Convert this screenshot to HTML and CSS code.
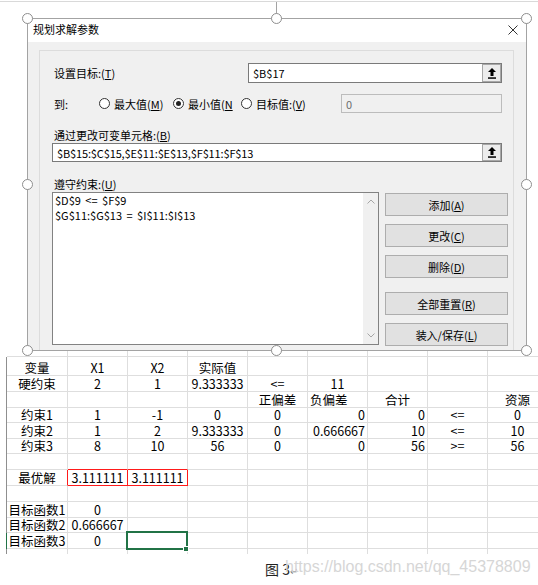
FILE: index.html
```html
<!DOCTYPE html>
<html lang="zh-CN">
<head>
<meta charset="utf-8">
<title>规划求解参数</title>
<link rel="stylesheet" href="styles.css">
</head>
<body>
<div class="page">
  <div class="topline"></div>
  <div class="frame">
    <span class="rot"></span>
    <span class="hd hd-tl"></span><span class="hd hd-tm"></span><span class="hd hd-tr"></span>
    <span class="hd hd-ml"></span><span class="hd hd-mr"></span>
    <span class="hd hd-bl"></span><span class="hd hd-bm"></span><span class="hd hd-br"></span>
    <div class="dialog">
      <div class="titlebar">
        <span class="title">规划求解参数</span>
        <svg class="close" width="10" height="10" viewBox="0 0 10 10"><path d="M0.5 0.5 L9.5 9.5 M9.5 0.5 L0.5 9.5" stroke="#333" stroke-width="1" fill="none"/></svg>
      </div>
      <div class="body">
        <div class="panel">
          <div class="row r-target">
            <span class="lbl-target">设置目标:(<u>T</u>)</span>
            <div class="edit e-target">
              <span class="val">$B$17</span>
              <span class="ref"><svg width="8" height="11" viewBox="0 0 8 11"><path d="M4 0 L8 4 L5.5 4 L5.5 8 L2.5 8 L2.5 4 L0 4 Z" fill="#000"/><rect x="0" y="9.3" width="8" height="1.5" fill="#000"/></svg></span>
            </div>
          </div>
          <div class="row r-to">
            <span class="lbl-to">到:</span>
            <span class="radio"></span><span class="rtext rt1">最大值(<u>M</u>)</span>
            <span class="radio on"></span><span class="rtext rt2">最小值(<u>N</u></span>
            <span class="radio"></span><span class="rtext">目标值:(<u>V</u>)</span>
            <div class="edit e-value">0</div>
          </div>
          <div class="blk">通过更改可变单元格:(<u>B</u>)</div>
          <div class="edit e-cells">
            <span class="val tight">$B$15:$C$15,$E$11:$E$13,$F$11:$F$13</span>
            <span class="ref"><svg width="8" height="11" viewBox="0 0 8 11"><path d="M4 0 L8 4 L5.5 4 L5.5 8 L2.5 8 L2.5 4 L0 4 Z" fill="#000"/><rect x="0" y="9.3" width="8" height="1.5" fill="#000"/></svg></span>
          </div>
          <div class="blk">遵守约束:(<u>U</u>)</div>
          <div class="cons">
            <div class="list">
              <div class="items">
                <div>$D$9 &lt;= $F$9</div>
                <div>$G$11:$G$13 = $I$11:$I$13</div>
              </div>
              <div class="scroll">
                <svg width="8" height="5" viewBox="0 0 8 5"><path d="M0.5 4.5 L4 1 L7.5 4.5" stroke="#a6a6a6" fill="none"/></svg>
                <svg width="8" height="5" viewBox="0 0 8 5"><path d="M0.5 0.5 L4 4 L7.5 0.5" stroke="#a6a6a6" fill="none"/></svg>
              </div>
            </div>
            <div class="btns">
              <div class="btn">添加(<u>A</u>)</div>
              <div class="btn">更改(<u>C</u>)</div>
              <div class="btn">删除(<u>D</u>)</div>
              <div class="btn gap">全部重置(<u>R</u>)</div>
              <div class="btn">装入/保存(<u>L</u>)</div>
            </div>
          </div>
          <div class="cut"></div>
        </div>
      </div>
    </div>
  </div>

  <div class="sheet">
    <div class="r r0 h6"><div class="c"></div><div class="c"></div><div class="c"></div><div class="c"></div><div class="c"></div><div class="c"></div><div class="c"></div><div class="c"></div><div class="c"></div></div>
    <div class="r h19"><div class="c">变量</div><div class="c">X1</div><div class="c">X2</div><div class="c">实际值</div><div class="c"></div><div class="c"></div><div class="c"></div><div class="c"></div><div class="c"></div></div>
    <div class="r h16"><div class="c">硬约束</div><div class="c">2</div><div class="c">1</div><div class="c">9.333333</div><div class="c">&lt;=</div><div class="c">11</div><div class="c"></div><div class="c"></div><div class="c"></div></div>
    <div class="r h16"><div class="c"></div><div class="c"></div><div class="c"></div><div class="c"></div><div class="c">正偏差</div><div class="c lt">负偏差</div><div class="c">合计</div><div class="c"></div><div class="c">资源</div></div>
    <div class="r h15"><div class="c">约束1</div><div class="c">1</div><div class="c">-1</div><div class="c">0</div><div class="c">0</div><div class="c rt">0</div><div class="c rt">0</div><div class="c">&lt;=</div><div class="c">0</div></div>
    <div class="r h16"><div class="c">约束2</div><div class="c">1</div><div class="c">2</div><div class="c">9.333333</div><div class="c">0</div><div class="c rt">0.666667</div><div class="c rt">10</div><div class="c">&lt;=</div><div class="c">10</div></div>
    <div class="r h15"><div class="c">约束3</div><div class="c">8</div><div class="c">10</div><div class="c">56</div><div class="c">0</div><div class="c rt">0</div><div class="c rt">56</div><div class="c">&gt;=</div><div class="c">56</div></div>
    <div class="r h16"><div class="c"></div><div class="c red-b"></div><div class="c red-b"></div><div class="c"></div><div class="c"></div><div class="c"></div><div class="c"></div><div class="c"></div><div class="c"></div></div>
    <div class="r h16"><div class="c red-r">最优解</div><div class="c red-r red-b">3.111111</div><div class="c red-r red-b">3.111111</div><div class="c"></div><div class="c"></div><div class="c"></div><div class="c"></div><div class="c"></div><div class="c"></div></div>
    <div class="r h16"><div class="c"></div><div class="c"></div><div class="c"></div><div class="c"></div><div class="c"></div><div class="c"></div><div class="c"></div><div class="c"></div><div class="c"></div></div>
    <div class="r h16"><div class="c">目标函数1</div><div class="c">0</div><div class="c"></div><div class="c"></div><div class="c"></div><div class="c"></div><div class="c"></div><div class="c"></div><div class="c"></div></div>
    <div class="r h15"><div class="c">目标函数2</div><div class="c">0.666667</div><div class="c"></div><div class="c"></div><div class="c"></div><div class="c"></div><div class="c"></div><div class="c"></div><div class="c"></div></div>
    <div class="r h16 r-active"><div class="c">目标函数3</div><div class="c">0</div><div class="c sel"></div><div class="c"></div><div class="c"></div><div class="c"></div><div class="c"></div><div class="c"></div><div class="c"></div></div>
    <div class="r h5 r-last"><div class="c"></div><div class="c"></div><div class="c"></div><div class="c"></div><div class="c"></div><div class="c"></div><div class="c"></div><div class="c"></div><div class="c"></div></div>
  </div>

  <div class="caption">图 3<span class="ret">↵</span></div>
  <div class="wm">https://blog.csdn.net/qq_45378809</div>
</div>
</body>
</html>
```

FILE: styles.css
```css
* { box-sizing: border-box; }
html, body { margin: 0; padding: 0; background: #fff; }
body { font-family: "Noto Sans CJK SC", "Noto Sans", sans-serif; color: #000; }
u { text-decoration: underline; text-underline-offset: 1px; }

.page { position: relative; width: 538px; height: 585px; overflow: hidden; }
.topline { height: 1px; margin-top: 1px; background: #d9d9d9; }

/* selection frame around the dialog picture */
.frame { position: relative; margin: 16px 0 0 27px; width: 500px; height: 333px; border: 1px solid #a3a3a3; }
.rot { position: absolute; left: 248px; top: -17px; width: 1px; height: 12px; background: #a3a3a3; }
.hd { position: absolute; width: 11px; height: 11px; border-radius: 50%; border: 1px solid #8e8e8e; background: #fff; z-index: 3; }
.hd-tl { left: -6px; top: -6px; }
.hd-tm { left: 243px; top: -6px; }
.hd-tr { left: 493px; top: -6px; }
.hd-ml { left: -6px; top: 160px; }
.hd-mr { left: 493px; top: 160px; }
.hd-bl { left: -6px; top: 326px; }
.hd-bm { left: 243px; top: 326px; }
.hd-br { left: 493px; top: 326px; }

.dialog { height: 100%; overflow: hidden; font-size: 11px; }
.titlebar { height: 23px; background: #fff; display: flex; justify-content: space-between; }
.title { padding-left: 5px; line-height: 21px; }
.close { margin: 6px 8px 0 0; flex: none; }

.body { height: 308px; background: #f0f0f0; padding: 8px 12px 0 11px; overflow: hidden; }
.panel { border: 1px solid #dcdcdc; border-bottom: 0; height: 320px; padding: 12px 5px 0 12px; }

.row { display: flex; align-items: center; margin-right: 6px; white-space: nowrap; }
.r-target { height: 20px; }
.lbl-target { flex: 1; padding-left: 2px; }
.r-to { height: 19px; margin-top: 11px; }
.lbl-to { width: 47px; padding-left: 2px; flex: none; }

.edit { display: flex; align-items: center; background: #fff; border: 1px solid #7a7a7a; }
.e-target { width: 254px; height: 20px; flex: none; }
.e-cells { height: 19px; margin-right: 6px; }
.val { flex: 1; padding-left: 4px; line-height: 16px; white-space: nowrap; overflow: hidden; }
.tight { letter-spacing: -0.14px; }
.ref { width: 19px; align-self: stretch; border: 1px solid #a7a7a7; background: #ececec; display: flex; align-items: center; justify-content: center; flex: none; }
.e-value { margin-left: auto; width: 161px; height: 19px; background: #f0f0f0; border-color: #bcbcbc; color: #6d6d6d; padding-left: 4px; flex: none; }

.radio { width: 11px; height: 11px; border-radius: 50%; border: 1px solid #333; background: #fff; flex: none; display: flex; align-items: center; justify-content: center; }
.radio.on::after { content: ""; width: 5px; height: 5px; border-radius: 50%; background: #222; }
.rtext { margin-left: 4px; flex: none; }
.rt1 { width: 59px; }
.rt2 { width: 53px; }

.blk { margin-top: 14px; line-height: 16px; padding-left: 2px; white-space: nowrap; }

.cons { display: flex; align-items: flex-start; }
.list { width: 327px; height: 153px; border: 1px solid #828282; background: #fff; display: flex; flex: none; }
.items { flex: 1; padding-left: 2px; line-height: 15px; white-space: nowrap; word-spacing: 2px; }
.scroll { width: 15px; background: #f0f0f0; display: flex; flex-direction: column; justify-content: space-between; align-items: center; padding: 6px 0; }
.btns { margin-left: 6px; margin-top: 1px; width: 123px; display: flex; flex-direction: column; flex: none; }
.btn { height: 23px; border: 1px solid #adadad; background: #e1e1e1; display: flex; align-items: center; justify-content: center; margin-top: 8px; white-space: nowrap; }
.btn:first-child { margin-top: 0; }
.btn.gap { margin-top: 14px; }
.cut { margin: 4px 0 0 4px; width: 12px; height: 1px; background: #444; }

/* spreadsheet */
.sheet { margin-left: 6px; width: 532px; overflow: hidden; font-size: 12.5px; line-height: 15px; color: #000; }
.r { display: flex; border-left: 1px solid #8f8f8f; }
.r0 { border-left-color: transparent; }
.r-active { border-left-color: #217346; }
.h5 { height: 5px; }
.h6 { height: 6px; }
.h15 { height: 15px; }
.h16 { height: 16px; }
.h19 { height: 19px; }
.c { flex: none; width: 60px; border-right: 1px solid #dedede; border-bottom: 1px solid #dedede; display: flex; align-items: flex-end; justify-content: center; white-space: nowrap; position: relative; }
.c:first-child { width: 61px; }
.r-last .c { border-bottom: 0; }
.rt { justify-content: flex-end; padding-right: 2px; }
.lt { justify-content: flex-start; padding-left: 2px; }
.c.red-r { border-right-color: #ff1a1a; }
.c.red-b { border-bottom-color: #ff1a1a; }
.sel::after { content: ""; position: absolute; top: -2px; left: -2px; right: -1px; bottom: -2px; border: 2px solid #217346; z-index: 1; }
.sel::before { content: ""; position: absolute; left: 56px; top: 14px; width: 4px; height: 4px; background: #217346; box-shadow: 0 0 0 1px #fff; z-index: 2; }

.caption { margin-top: 5px; padding-left: 265px; font-size: 14px; line-height: 20px; color: #222; white-space: nowrap; }
.ret { font-size: 10px; color: #777; }
.wm { position: absolute; left: 285px; top: 558px; font-family: "Liberation Sans", sans-serif; font-size: 16px; line-height: 18px; color: #d6d6d6; white-space: nowrap; }
```
